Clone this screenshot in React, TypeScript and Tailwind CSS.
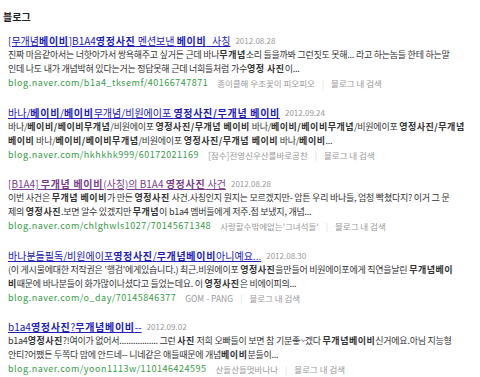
import React from "react";

type Seg = string | { b: string };

const F = { fontFamily: '"Noto Sans CJK KR", "Noto Sans", sans-serif' };

function Txt({ segs, bt }: { segs: Seg[]; bt: string }) {
  return (
    <>
      {segs.map((s, i) =>
        typeof s === "string" ? (
          <span key={i}>{s}</span>
        ) : (
          <b key={i} className={`font-bold ${bt}`}>
            {s.b}
          </b>
        )
      )}
    </>
  );
}

type Entry = {
  title: Seg[];
  visited?: boolean;
  date: string;
  d1: Seg[];
  d2: Seg[];
  url: string;
  author: string;
};

const entries: Entry[] = [
  {
    title: ["[무개념", { b: "베이비" }, "]B1A4", { b: "영정사진" }, " 멘션보낸 ", { b: "베이비" }, "_사칭"],
    date: "2012.08.28",
    d1: ["진짜 마음같아서는 너핫아가서 쌍욕해주고 싶거든 근데 바나", { b: "무개념" }, "소리 들을까봐 그런짓도 못해... 라고 하는놈들 한테 하는말"],
    d2: ["인데 나도 내가 개념박혀 있다는거는 정답못해 근데 너희들처럼 가수", { b: "영정 사진" }, "이..."],
    url: "blog.naver.com/b1a4_tksemf/40166747871",
    author: "종이클해 우조꽃이 피오피오",
  },
  {
    title: ["바나/", { b: "베이비" }, "/", { b: "베이비" }, "무개념/비원에이포 ", { b: "영정사진/무개념 베이비" }],
    date: "2012.09.24",
    d1: ["바나/", { b: "베이비/베이비무개념" }, "/비원에이포 ", { b: "영정사진/무개념 베이비" }, " 바나/", { b: "베이비/베이비무개념" }, "/비원에이포 ", { b: "영정사진/무개념" }],
    d2: [{ b: "베이비" }, " 바나/", { b: "베이비/베이비무개념" }, "/비원에이포 ", { b: "영정사진/무개념 베이비" }, " 바나/", { b: "베이비" }, "..."],
    url: "blog.naver.com/hkhkhk999/60172021169",
    author: "[잠수]전영신우산를바로공찬",
  },
  {
    title: ["[B1A4] ", { b: "무개념 베이비" }, "(사칭)의 B1A4 ", { b: "영정사진" }, " 사건"],
    visited: true,
    date: "2012.08.28",
    d1: ["이번 사건은 ", { b: "무개념 베이비" }, "가 만든 ", { b: "영정사진" }, " 사건.사칭인지 뭔지는 모르겠지만- 암튼 우리 바나들, 엄청 빡쳤다지? 이거 그 문"],
    d2: ["제의 ", { b: "영정사진" }, ".보면 알수 있겠지만 ", { b: "무개념" }, "이 b1a4 멤버들에게 저주.접 보냈지, 개념..."],
    url: "blog.naver.com/chlghwls1027/70145671348",
    author: "사랑할수밖에없는'그녀석들'",
  },
  {
    title: ["바나분들필독/비원에이포", { b: "영정사진" }, "/", { b: "무개념베이비" }, "아니예요..."],
    date: "2012.08.30",
    d1: ["(이 게시물에대한 저작권은 '행검'에게있습니다.) 최근.비원에이포 ", { b: "영정사진" }, "을만들어 비원에이포에게 직연을날린 ", { b: "무개념베이" }],
    d2: [{ b: "비" }, "때문에 바나분들이 화가많이나셨다고 들었는데요. 이 ", { b: "영정사진" }, "은 비에이피의..."],
    url: "blog.naver.com/o_day/70145846377",
    author: "GOM - PANG",
  },
  {
    title: ["b1a4", { b: "영정사진" }, "?", { b: "무개념베이비" }, "--"],
    date: "2012.09.02",
    d1: ["b1a4", { b: "영정사진" }, "?!여이가 없어서................. 그런 ", { b: "사진" }, " 저희 오빠들이 보면 참 기분좋~겠다 ", { b: "무개념베이비" }, "신거에요.아님 지능형"],
    d2: ["안티?어쨌든 두쪽다 맘에 안드네-- 니네같은 애들때문에 개념", { b: "베이비" }, "분들이..."],
    url: "blog.naver.com/yoon1113w/110146424595",
    author: "산들산들멋바나나",
  },
];

export default function App() {
  return (
    <div className="w-[480px] h-[377px] bg-white overflow-hidden text-[#333]" style={F}>
      <div className="pl-[3px] pt-[10px] h-[33px] text-[10px] leading-[14px] font-bold text-[#222]">블로그</div>
      <div className="flex flex-col gap-[14.5px] pl-[8px]">
        {entries.map((e, i) => (
          <div key={i} className="flex flex-col text-[9px]">
            <div className="h-[15px] leading-[15px] whitespace-nowrap flex items-center gap-[5px]">
              <span className={`underline text-[10px] ${e.visited ? "text-[#7b3b8c]" : "text-[#2020b8]"}`}>
                <Txt segs={e.title} bt="tracking-[0.7px]" />
              </span>
              <span className="text-[#999] text-[8px]">{e.date}</span>
            </div>
            <div className="h-[14px] leading-[14px] whitespace-nowrap tracking-[-0.25px]">
              <Txt segs={e.d1} bt="tracking-[0.5px]" />
            </div>
            <div className="h-[14px] leading-[14px] whitespace-nowrap tracking-[-0.25px]">
              <Txt segs={e.d2} bt="tracking-[0.5px]" />
            </div>
            <div className="h-[14px] leading-[14px] whitespace-nowrap flex items-center text-[8.5px]">
              <span className="text-[#3a9a4a] text-[9px] tracking-[0.5px]">{e.url}</span>
              <span className="text-[#999] ml-[9px]">{e.author}</span>
              <span className="text-[#ddd] mx-[7px]">|</span>
              <span className="text-[#999]">블로그 내 검색</span>
            </div>
          </div>
        ))}
      </div>
    </div>
  );
}
